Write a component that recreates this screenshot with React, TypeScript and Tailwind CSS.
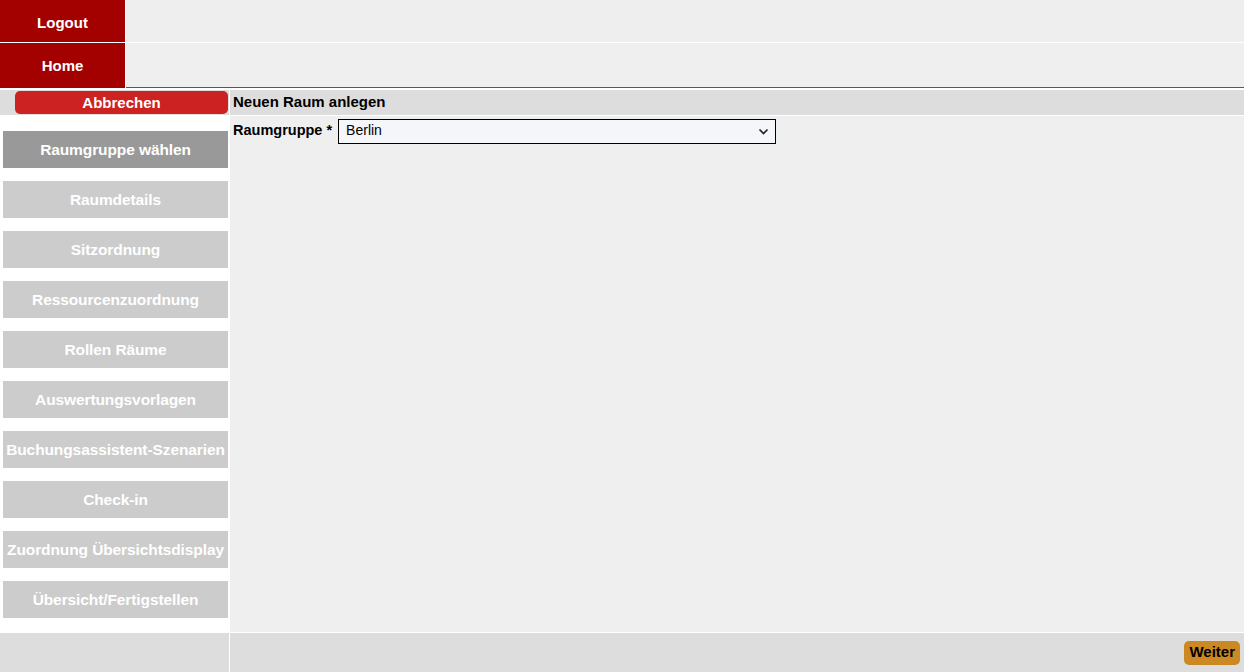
import React from 'react';

const steps = [
  'Raumgruppe wählen',
  'Raumdetails',
  'Sitzordnung',
  'Ressourcenzuordnung',
  'Rollen Räume',
  'Auswertungsvorlagen',
  'Buchungsassistent-Szenarien',
  'Check-in',
  'Zuordnung Übersichtsdisplay',
  'Übersicht/Fertigstellen',
];

const App: React.FC = () => {
  return (
    <div className="flex h-[672px] w-full flex-col overflow-hidden bg-white font-['Liberation_Sans',Arial,sans-serif] text-[15px] text-black">
      {/* Top menu */}
      <div className="flex h-[42px] gap-px">
        <button className="flex w-[125px] items-center justify-center bg-[#a30000] pt-[4px] font-bold text-white">Logout</button>
        <div className="flex-1 bg-[#eeeeee]" />
      </div>
      <div className="mt-px flex h-[45px] gap-px">
        <button className="flex w-[125px] items-center justify-center bg-[#a30000] pt-[2px] font-bold text-white">Home</button>
        <div className="flex-1 border-b border-[#a33a3a] bg-[#efefef]" />
      </div>

      {/* Main */}
      <div className="mt-[2px] flex flex-1 gap-px">
        <div className="flex w-[229px] flex-col">
          <div className="flex h-[25px] items-center bg-[#dddddd] pl-[15px]">
            <button className="h-[23px] w-[213px] rounded-[5px] bg-[#cc2222] pt-px font-bold text-white">Abbrechen</button>
          </div>
          <div className="flex flex-1 flex-col gap-[13px] bg-white pl-[3px] pt-[16px]">
            {steps.map((s, i) => (
              <div
                key={s}
                className={`flex h-[37px] w-[225px] items-center justify-center whitespace-nowrap pt-px text-[15.5px] font-bold tracking-[-0.1px] text-white ${
                  i === 0 ? 'bg-[#999999]' : 'bg-[#cccccc]'
                }`}
              >
                {s}
              </div>
            ))}
          </div>
        </div>

        <div className="flex flex-1 flex-col">
          <div className="flex h-[25px] items-center bg-[#dddddd] pl-[3px] font-bold">Neuen Raum anlegen</div>
          <div className="mt-px flex-1 bg-[#efefef] pl-[3px] pt-[3px]">
            <div className="flex items-center gap-[6px]">
              <label className="pb-[2px] text-[14.5px] font-bold">Raumgruppe *</label>
              <div className="relative">
                <select className="h-[25px] w-[438px] appearance-none border border-black bg-[#f5f6fa] pb-[2px] pl-[7px] text-[14px] text-black outline-none">
                  <option>Berlin</option>
                </select>
                <svg
                  className="pointer-events-none absolute right-[7px] top-[9px]"
                  width="11"
                  height="7"
                  viewBox="0 0 11 7"
                  fill="none"
                  stroke="#222"
                  strokeWidth="1.7"
                >
                  <path d="M1.5 1.5 L5.5 5.5 L9.5 1.5" />
                </svg>
              </div>
            </div>
          </div>
        </div>
      </div>

      {/* Footer */}
      <div className="mt-px flex h-[39px] gap-px">
        <div className="w-[229px] bg-[#dddddd]" />
        <div className="flex flex-1 items-center justify-end bg-[#dddddd] pr-[4px]">
          <button className="h-[24px] rounded-[5px] bg-[#cc8822] px-[5px] font-bold text-black">Weiter</button>
        </div>
      </div>
    </div>
  );
};

export default App;
